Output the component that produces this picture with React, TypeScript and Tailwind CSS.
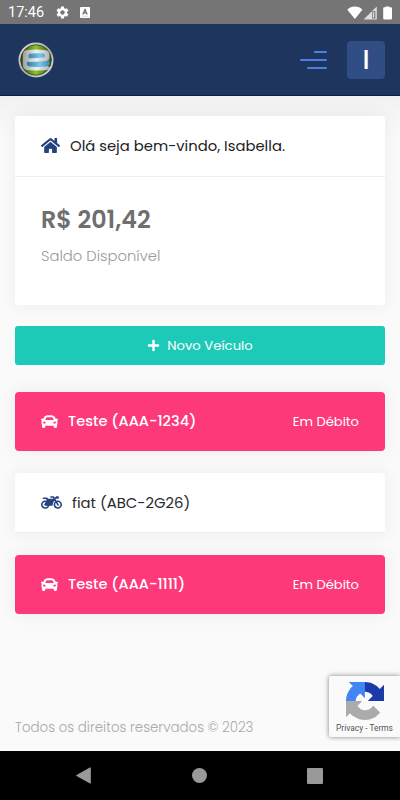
import type { ReactNode } from "react";
import { FaCar, FaHome, FaMotorcycle, FaPlus } from "react-icons/fa";
import { MdSettings } from "react-icons/md";

type Vehicle = {
  name: string;
  plate: string;
  kind: "car" | "motorcycle";
  overdue: boolean;
};

const vehicles: Vehicle[] = [
  { name: "Teste", plate: "AAA-1234", kind: "car", overdue: true },
  { name: "fiat", plate: "ABC-2G26", kind: "motorcycle", overdue: false },
  { name: "Teste", plate: "AAA-1111", kind: "car", overdue: true },
];

function StatusBar() {
  return (
    <div className="flex h-6 shrink-0 items-center bg-[#757575] pl-2 pr-[7px] pt-px font-['Roboto',sans-serif] text-white">
      <span className="w-[36px] pt-[2px] text-[14.5px] leading-none">17:46</span>
      <MdSettings className="ml-[11px] size-[15px]" />
      <svg className="ml-[10px] h-[11px] w-[10px]" viewBox="0 0 10 11">
        <rect width="10" height="11" rx="1" fill="#fff" />
        <path d="M2.8 7.6 5 2.6l2.2 5M3.6 6h2.8" fill="none" stroke="#666" strokeWidth="1.2" />
        <path d="M2 9.2h6" stroke="#bbb" strokeWidth=".6" />
      </svg>
      <svg className="ml-auto h-[14px] w-[46px]" viewBox="0 0 46 14">
        <path d="M.3 3.7C2.2 1.7 4.9.6 7.9.6s5.6 1.1 7.5 3.1L7.9 13z" fill="#fff" />
        <path d="M16.5 13.5 29.8.6v12.9z" fill="#dedede" />
        <path d="M25.3 5.1h3v7.4h-3z" fill="#666" />
        <path d="M26.2 5.8h1v5.9h-1z" fill="#fff" />
        <path d="M38.4 1.2V.4h4v.8h1.4q1.2 0 1.2 1.2v9.9q0 1.2-1.2 1.2h-6.4q-1.2 0-1.2-1.2V2.4q0-1.2 1.2-1.2z" fill="#fff" />
      </svg>
    </div>
  );
}

function Logo() {
  return (
    <svg className="size-9" viewBox="0 0 36 36">
      <defs>
        <linearGradient id="ring" x1="0" y1="0" x2="1" y2="1">
          <stop offset="0" stopColor="#e5e5e8" />
          <stop offset=".5" stopColor="#a5a7aa" />
          <stop offset="1" stopColor="#e2e3e5" />
        </linearGradient>
        <linearGradient id="green" x1="0" y1="0" x2="1" y2="0">
          <stop offset="0" stopColor="#243b0a" />
          <stop offset=".5" stopColor="#8bc42b" />
          <stop offset="1" stopColor="#2e480d" />
        </linearGradient>
        <linearGradient id="blue" gradientUnits="userSpaceOnUse" x1="8" y1="0" x2="31" y2="0">
          <stop offset="0" stopColor="#2c749c" />
          <stop offset=".6" stopColor="#74c8ec" />
          <stop offset="1" stopColor="#3d8fb6" />
        </linearGradient>
        <linearGradient id="silver" gradientUnits="userSpaceOnUse" x1="4" y1="0" x2="33" y2="0">
          <stop offset="0" stopColor="#97999c" />
          <stop offset=".5" stopColor="#f0f0f0" />
          <stop offset="1" stopColor="#a9acaf" />
        </linearGradient>
      </defs>
      <circle cx="18" cy="18" r="16.5" fill="url(#green)" stroke="url(#ring)" strokeWidth="2" />
      <circle cx="18" cy="18" r="15.2" fill="none" stroke="#303b20" strokeWidth=".7" />
      <path
        d="M8 8.2Q18 6.800 28 8.200Q31.500 9 31.500 13V15.500Q31.300 18.300 29 18.800L30 24.800H32V26.500Q30 28 27 28.200Q18 29 9 28Q5 27.500 4.800 23V13Q5 9 8 8.200z"
        fill="url(#silver)"
      />
      <path d="M11 11.800Q18 10.800 25.500 11.500Q27.500 12 27 14Q26.700 15.200 25 15.500Q17 16.500 10.500 16.200V14Z" fill="url(#blue)" />
      <path d="M9 19.800Q20 20.200 31.500 18.500V22.500Q30.500 24.400 28 24.600Q18 25.400 11 24.500Q8.200 24 9 19.800z" fill="url(#blue)" />
    </svg>
  );
}

function Header() {
  return (
    <header className="flex h-[72px] shrink-0 items-center border-b border-[#0a1f4e] bg-[#1e355e] pl-[17.5px] pr-[15px]">
      <Logo />
      <button className="ml-auto flex w-[27px] flex-col items-end gap-[6px]" aria-label="Menu">
        <span className="h-[2px] w-[13px] rounded-full bg-[#4b82e8]" />
        <span className="h-[2px] w-[27px] rounded-full bg-[#4b82e8]" />
        <span className="h-[2px] w-[20px] rounded-full bg-[#4b82e8]" />
      </button>
      <div className="ml-5 flex size-[38px] items-center justify-center rounded bg-[#304d84] text-[27px] font-medium leading-none text-white">
        I
      </div>
    </header>
  );
}

function Card({ children, className = "" }: { children: ReactNode; className?: string }) {
  return <section className={`rounded shadow-[0_0_16px_rgba(60,60,70,0.08)] ${className}`}>{children}</section>;
}

function VehicleCard({ vehicle }: { vehicle: Vehicle }) {
  const Icon = vehicle.kind === "car" ? FaCar : FaMotorcycle;

  return (
    <Card className={vehicle.overdue ? "bg-[#fd397a] text-white" : "bg-white text-[#292a2d]"}>
      <div className={`flex h-[59.5px] items-center px-[26px] ${vehicle.overdue ? "" : "border-b border-[#ebedf2]"}`}>
        <Icon className={vehicle.overdue ? "size-[17px]" : "h-[17px] w-[21px] text-[#24427d]"} />
        <h3 className={`ml-[10px] pt-[2px] ${vehicle.overdue ? "text-[14.6px] font-medium" : "text-[14.85px] font-normal"}`}>
          {vehicle.name} ({vehicle.plate})
        </h3>
        {vehicle.overdue ? <span className="ml-auto pt-px text-[13.1px]">Em Débito</span> : null}
      </div>
    </Card>
  );
}

function RecaptchaBadge() {
  return (
    <div className="absolute bottom-[63px] right-0 flex h-[61px] w-[71px] flex-col items-center rounded-l-[2px] bg-[#fafafa] pt-[6px] shadow-[0_0_5px_#808080]">
      <svg className="size-[38px]" viewBox="0 0 64 64">
        <path
          d="M64 31.955l-.033-1.37V4.687l-7.16 7.16C50.948 4.674 42.033.093 32.05.093c-10.4 0-19.622 4.96-25.458 12.64l11.736 11.86a15.55 15.55 0 0 1 4.754-5.334c2.05-1.6 4.952-2.906 8.968-2.906.485 0 .86.057 1.135.163 4.976.393 9.288 3.14 11.828 7.124l-8.307 8.307L64 31.953"
          fill="#1c3aa9"
        />
        <path
          d="M31.862.094l-1.37.033H4.594l7.16 7.16C4.58 13.147 0 22.06 0 32.046c0 10.4 4.96 19.622 12.64 25.458L24.5 45.768a15.55 15.55 0 0 1-5.334-4.754c-1.6-2.05-2.906-4.952-2.906-8.968 0-.485.057-.86.163-1.135.393-4.976 3.14-9.288 7.124-11.828l8.307 8.307L31.86.095"
          fill="#4285f4"
        />
        <path
          d="M.001 32.045l.033 1.37v25.898l7.16-7.16c5.86 7.173 14.774 11.754 24.76 11.754 10.4 0 19.622-4.96 25.458-12.64l-11.736-11.86a15.55 15.55 0 0 1-4.754 5.334c-2.05 1.6-4.952 2.906-8.968 2.906-.485 0-.86-.057-1.135-.163-4.976-.393-9.288-3.14-11.828-7.124l8.307-8.307c-10.522.04-22.4.066-27.295-.005"
          fill="#ababab"
        />
      </svg>
      <p className="mt-[3px] whitespace-nowrap font-['Roboto',sans-serif] text-[8.4px] leading-[10px] text-[#555]">
        Privacy - Terms
      </p>
    </div>
  );
}

function NavigationBar() {
  return (
    <nav className="flex h-[49px] shrink-0 items-center justify-between bg-black pl-[75px] pr-[77px]">
      <svg className="h-[17px] w-[17px]" viewBox="0 0 17 17">
        <path d="M1.5 8.5 15.3.8v15.4z" fill="#999" stroke="#999" strokeLinejoin="round" />
      </svg>
      <span className="size-[15px] rounded-full bg-[#999]" />
      <span className="size-4 rounded-[1px] bg-[#999]" />
    </nav>
  );
}

export default function App() {
  return (
    <div className="relative flex h-[800px] w-[400px] flex-col overflow-hidden bg-[#fafafa] font-['Poppins','Inter',sans-serif]">
      <StatusBar />
      <Header />

      <main className="flex flex-1 flex-col bg-linear-to-b from-[#f1f1f1] to-[#fafafa] to-[40px] px-[15px] pt-5">
        <Card className="h-[189px] bg-white">
          <div className="flex h-[61px] items-center border-b border-[#ebedf2] px-[26px]">
            <FaHome className="mb-[2px] size-[19px] text-[#24427d]" />
            <h2 className="ml-[10px] text-[14.8px] text-[#202124]">Olá seja bem-vindo, Isabella.</h2>
          </div>
          <div className="px-[26px] pt-[27px]">
            <p className="text-[23.8px] font-semibold leading-8 text-[#6f6f70]">R$ 201,42</p>
            <p className="mt-[10px] text-[14.75px] font-light leading-5 text-[#99999b]">Saldo Disponível</p>
          </div>
        </Card>

        <button className="mt-[21px] flex h-[38.5px] shrink-0 items-center justify-center gap-[7px] rounded-[3px] bg-[#1dc9b7] pt-px text-[13.2px] text-white">
          <FaPlus className="size-[13px]" />
          Novo Veículo
        </button>

        <div className="mt-[27px] flex flex-col gap-[22px]">
          {vehicles.map((vehicle) => (
            <VehicleCard key={vehicle.plate} vehicle={vehicle} />
          ))}
        </div>

        <footer className="mb-[12px] mt-auto text-[13.4px] font-light leading-[22px] text-[#a9a9ab]">
          Todos os direitos reservados © 2023
        </footer>
      </main>

      <NavigationBar />
      <RecaptchaBadge />
    </div>
  );
}
